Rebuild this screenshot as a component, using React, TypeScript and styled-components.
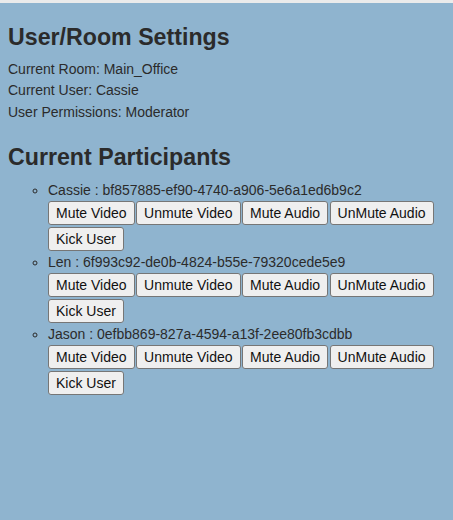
import React, {FC} from 'react'
import styled, {createGlobalStyle} from 'styled-components'

const GlobalStyle = createGlobalStyle`
  html, body {
    margin: 0;
    padding: 0;
    background: #8fb4cf;
  }
  body {
    font-family: "Liberation Sans", Arial, Helvetica, sans-serif;
    color: #2b2b2b;
  }
`

const Page = styled.div`
  min-height: 517px;
  border-top: 3px solid #ebebeb;
  padding: 0 8px;
  background: #8fb4cf;
`

const Heading = styled.h2`
  font-size: 23.2px;
  line-height: 28px;
  font-weight: bold;
  margin: 20px 0 7.5px 0;
`

const InfoLine = styled.div`
  font-size: 14px;
  line-height: 21.5px;
`

const ParticipantList = styled.ul`
  list-style: circle;
  margin: 0;
  padding-left: 40px;
`

const Participant = styled.li`
  font-size: 14px;
  line-height: 22px;
`

const Actions = styled.div`
  display: flex;
  flex-wrap: wrap;
  gap: 2px 1.5px;
`

const ActionButton = styled.button`
  font-family: "Liberation Sans", Arial, Helvetica, sans-serif;
  font-size: 14px;
  line-height: 16px;
  padding: 3px 7px;
  color: #111;
  background: #efefef;
  border: 1px solid #767676;
  border-radius: 3px;
`

type User = {name: string, id: string}

const participants: User[] = [
  {name: 'Cassie', id: 'bf857885-ef90-4740-a906-5e6a1ed6b9c2'},
  {name: 'Len', id: '6f993c92-de0b-4824-b55e-79320cede5e9'},
  {name: 'Jason', id: '0efbb869-827a-4594-a13f-2ee80fb3cdbb'},
]

const actions = ['Mute Video', 'Unmute Video', 'Mute Audio', 'UnMute Audio', 'Kick User']

const App: FC = () => {
  return (
    <Page>
      <GlobalStyle/>
      <Heading>User/Room Settings</Heading>
      <InfoLine>Current Room: Main_Office</InfoLine>
      <InfoLine>Current User: Cassie</InfoLine>
      <InfoLine>User Permissions: Moderator</InfoLine>
      <Heading>Current Participants</Heading>
      <ParticipantList>
        {participants.map(p => (
          <Participant key={p.id}>
            {p.name} : {p.id}
            <Actions>
              {actions.map(a => <ActionButton key={a}>{a}</ActionButton>)}
            </Actions>
          </Participant>
        ))}
      </ParticipantList>
    </Page>
  )
}

export default App
